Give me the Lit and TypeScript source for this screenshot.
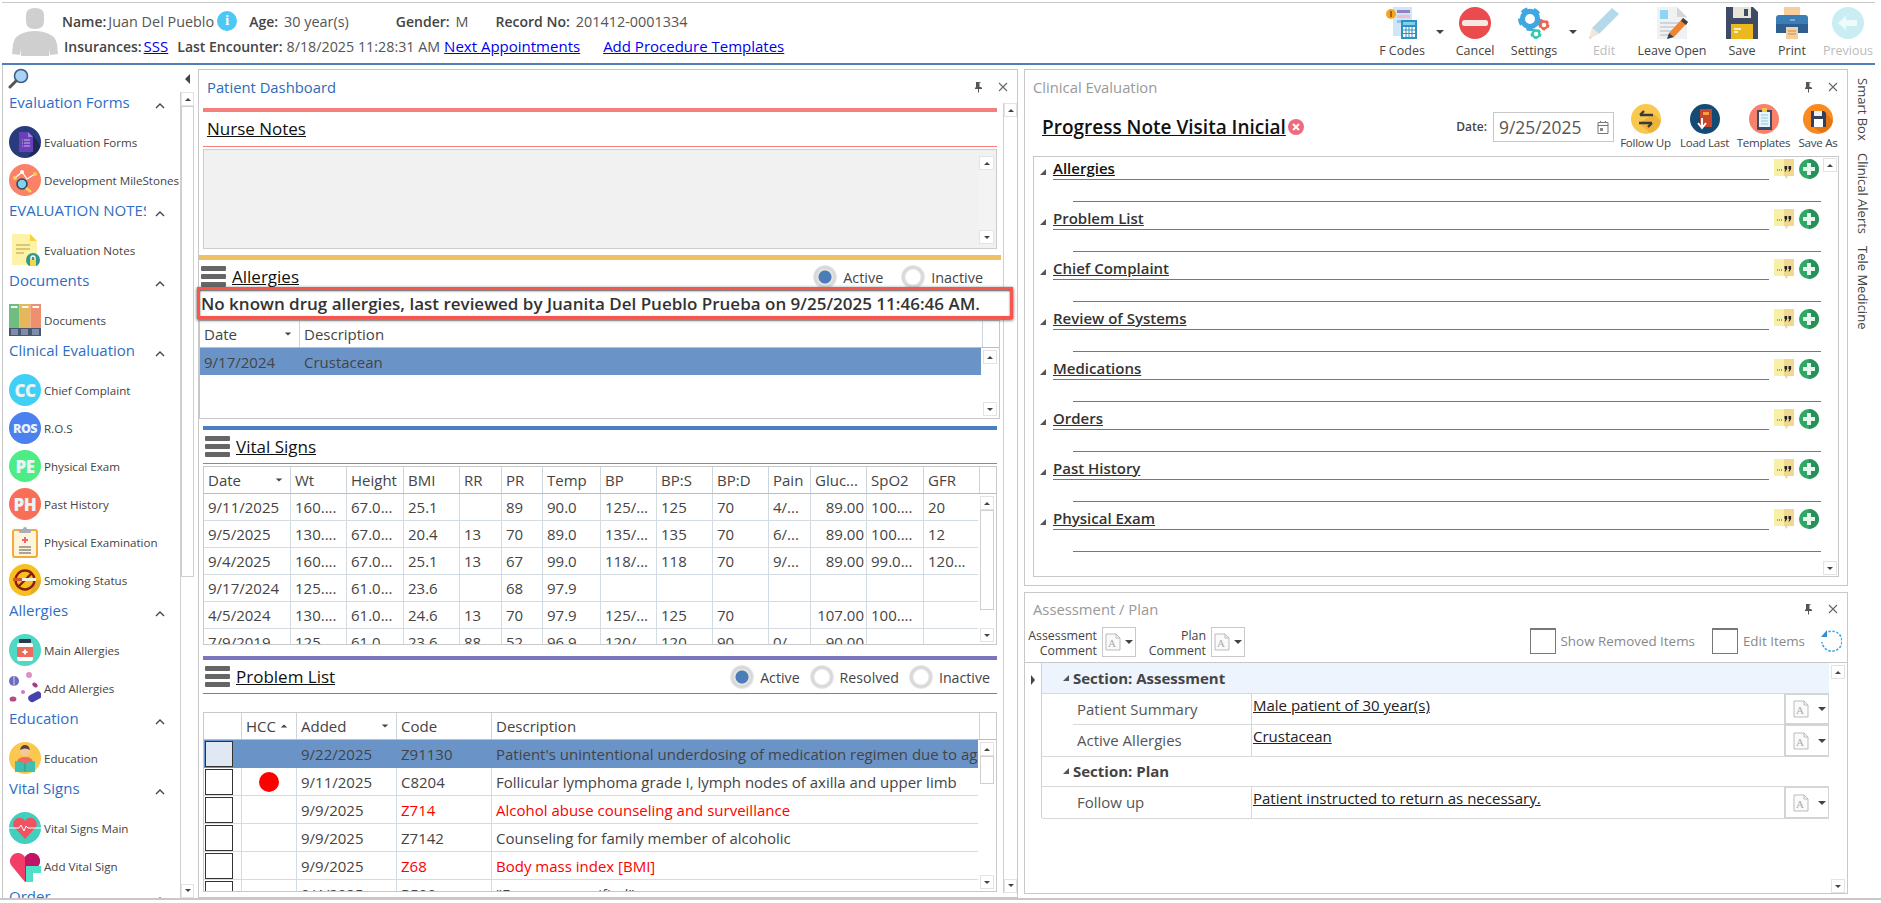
import { LitElement, html, css } from "lit";
import { customElement } from "lit/decorators.js";

const gear = (cx: number, cy: number, r: number, c: string) => html`<svg x="0" y="0" width="32" height="32" viewBox="0 0 32 32" style="overflow:visible"><circle cx=${cx} cy=${cy} r=${r * 0.72} fill="none" stroke=${c} stroke-width=${r * 0.5}></circle><circle cx=${cx} cy=${cy} r=${r * 0.98} fill="none" stroke=${c} stroke-width=${r * 0.32} stroke-dasharray=${`${r * 0.62} ${r * 0.62}`}></circle></svg>`;

const TB: Record<string, any> = {
  fcodes: html`<svg width="32" height="32" viewBox="0 0 32 32"><rect x="7" y="0" width="19" height="29" fill="#cfe6f7"></rect><rect x="11" y="3" width="13" height="3" fill="#9a7fc0"></rect><rect x="11" y="8" width="13" height="3" fill="#f3b9cf"></rect><rect x="11" y="13" width="13" height="3" fill="#8fc7ea"></rect><circle cx="5" cy="7" r="5" fill="#f2a422"></circle><rect x="4" y="4" width="2" height="6" fill="#a8620d"></rect><rect x="15" y="13" width="16" height="19" fill="#2d92bf"></rect><rect x="17" y="15" width="12" height="3" fill="#7fd0ea"></rect><rect x="17" y="20" width="12" height="10" fill="#fff"></rect><path d="M20 20v10M23 20v10M26 20v10M17 23h12M17 26.5h12" stroke="#2d92bf"></path></svg>`,
  cancel: html`<svg width="32" height="32" viewBox="0 0 32 32"><circle cx="16" cy="16" r="16" fill="#ea4b4f"></circle><rect x="3" y="13" width="26" height="6" rx="2.5" fill="#f6e7e3"></rect></svg>`,
  settings: html`<svg width="32" height="32" viewBox="0 0 32 32">${gear(12, 12, 10.5, "#3fa7e2")}${gear(26, 18, 4.8, "#f0634e")}${gear(18, 27, 4.8, "#38c7b0")}</svg>`,
  edit: html`<svg width="32" height="32" viewBox="0 0 32 32"><path d="M24 1l7 6L11 27l-7-6z" fill="#b6d9e9"></path><path d="M4 21l7 6-10 5z" fill="#f1e6dc"></path><path d="M2 29l2 2-3 1z" fill="#c9d8df"></path></svg>`,
  leave: html`<svg width="32" height="32" viewBox="0 0 32 32"><path d="M1 0h20l10 10v22H1z" fill="#eff1f3"></path><path d="M21 0l10 10H21z" fill="#d3d7da"></path><rect x="4" y="3" width="8" height="9" fill="#8fd4f3"></rect><path d="M4 16h20M4 20h16M4 24h12M4 28h10" stroke="#c8ccd0" stroke-width="1.4"></path><path d="M27 11l5 4-14 15-5-4z" fill="#f0842c"></path><path d="M27 11l5 4-2 3-5-4z" fill="#39414e"></path><path d="M13 26l5 4-7 2z" fill="#38404c"></path></svg>`,
  save: html`<svg width="32" height="32" viewBox="0 0 32 32"><path d="M0 0h27l5 5v27H0z" fill="#3e4a68"></path><rect x="7" y="0" width="18" height="11" fill="#e8e4d6"></rect><rect x="18" y="2" width="4" height="7" fill="#3e4a68"></rect><rect x="5" y="17" width="22" height="15" fill="#ecb820"></rect><path d="M8 22h7M8 25h4" stroke="#fff" stroke-width="1.4"></path></svg>`,
  print: html`<svg width="32" height="32" viewBox="0 0 32 32"><rect x="8" y="0" width="16" height="10" fill="#f7cf9e"></rect><path d="M3 8h26q3 0 3 3v13q0 2-3 2H3q-3 0-3-2V11q0-3 3-3z" fill="#3d7db7"></path><rect x="0" y="17" width="32" height="9" fill="#2d6090"></rect><rect x="10" y="20" width="12" height="12" fill="#f7cf9e"></rect><path d="M12 24h8M12 27h8" stroke="#b78e5c"></path><path d="M14 13h5" stroke="#bcd7ee"></path></svg>`,
  prev: html`<svg width="32" height="32" viewBox="0 0 32 32"><circle cx="16" cy="16" r="16" fill="#c9edf3"></circle><path d="M6 16l8-7v4h11v6H14v4z" fill="#eefafc"></path></svg>`,
};

const SI: Record<string, any> = {
  forms: html`<svg width="32" height="32" viewBox="0 0 32 32"><circle cx="16" cy="16" r="16" fill="#2a3b7d"></circle><path d="M24 9v16l-5.5 5.5A16 16 0 0 0 31.500 20z" fill="#1c2955"></path><path d="M10 6h9l5 5v15H10z" fill="#6a3fb8"></path><path d="M19 6l5 5h-5z" fill="#9d7fdc"></path><path d="M15 14h6M15 17h6M15 20h6" stroke="#c9b6ef"></path><path d="M13 14h1M13 17h1M13 20h1" stroke="#c9b6ef"></path></svg>`,
  miles: html`<svg width="32" height="32" viewBox="0 0 32 32"><circle cx="16" cy="16" r="16" fill="#fb8268"></circle><path d="M6 14L13 8l5 7 8-5" fill="none" stroke="#fff" stroke-width="1.2"></path><circle cx="6" cy="14" r="2" fill="#f7d35b"></circle><circle cx="13" cy="8" r="2" fill="#fff"></circle><circle cx="26" cy="10" r="2" fill="#f7d35b"></circle><circle cx="13" cy="20" r="5" fill="#7ed2ee" stroke="#33475b" stroke-width="1.6"></circle><path d="M17 24l5 4" stroke="#f7d35b" stroke-width="2.6"></path></svg>`,
  notes: html`<svg width="32" height="32" viewBox="0 0 32 32"><path d="M3 0h18l7 7v24H3z" fill="#fdf2a8"></path><path d="M21 0l7 7h-7z" fill="#f5d33f"></path><path d="M7 11h14M7 15h14M7 19h8" stroke="#cdbb60" stroke-width="1.3"></path><circle cx="24" cy="26" r="7" fill="#2b9a8d"></circle><rect x="21" y="26" width="6" height="6" fill="#f8d548"></rect><path d="M22 26v-2a2 2 0 0 1 4 0v2" fill="none" stroke="#fff" stroke-width="1.4"></path></svg>`,
  docs: html`<svg width="32" height="32" viewBox="0 0 32 32"><rect width="10.6" height="24" fill="#6fbe80"></rect><rect x="10.6" width="10.8" height="24" fill="#e5b75a"></rect><rect x="21.4" width="10.6" height="24" fill="#ee8f70"></rect><path d="M2 3h6.5M13 3h6.5M23.5 3H30" stroke="#fff" stroke-width="2"></path><rect y="24" width="32" height="8" fill="#4a566f"></rect><rect x="2" y="25" width="7" height="6" fill="#7f8cab"></rect><rect x="12" y="25" width="7" height="6" fill="#7f8cab"></rect><rect x="23" y="25" width="7" height="6" fill="#7f8cab"></rect></svg>`,
  clip: html`<svg width="32" height="32" viewBox="0 0 32 32"><rect x="4" y="4" width="24" height="27" rx="2" fill="#fdf4dc" stroke="#f4a938" stroke-width="2"></rect><path d="M10 6V3h4a2 2 0 0 1 4 0h4v3a1 1 0 0 1-1 1H11a1 1 0 0 1-1-1z" fill="#a9aeb3"></path><path d="M16 11v6M13 14h6" stroke="#f0656d" stroke-width="2"></path><path d="M10 21h12M10 24h12M10 27h12" stroke="#555" stroke-width="1.2"></path></svg>`,
  smoke: html`<svg width="32" height="32" viewBox="0 0 32 32"><circle cx="16" cy="16" r="16" fill="#f6c11e"></circle><path d="M7 16h21L20 31a16 16 0 0 0 12-15z" fill="#dfa12e" opacity=".7"></path><circle cx="16" cy="16" r="9.5" fill="none" stroke="#8a1f13" stroke-width="2.4"></circle><path d="M9 23L23 9" stroke="#8a1f13" stroke-width="2.4"></path><rect x="4" y="14" width="9" height="3" fill="#d8552b"></rect><rect x="13" y="14" width="14" height="3" fill="#f5f0e4"></rect></svg>`,
  bottle: html`<svg width="32" height="32" viewBox="0 0 32 32"><circle cx="16" cy="16" r="16" fill="#51d8c5"></circle><rect x="10" y="5" width="12" height="4" rx="1" fill="#2a3850"></rect><rect x="8" y="9" width="16" height="18" rx="2" fill="#fff"></rect><rect x="8" y="13" width="16" height="10" fill="#ee6a5b"></rect><path d="M16 15.5v5M13.5 18h5" stroke="#fff" stroke-width="1.8"></path></svg>`,
  pills: html`<svg width="32" height="32" viewBox="0 0 32 32"><circle cx="5" cy="9" r="5" fill="#6b6bc0"></circle><rect x="4.4" y="4" width="1.2" height="10" fill="#c5c5ea"></rect><circle cx="20" cy="3" r="3" fill="#e08fc4"></circle><ellipse cx="26" cy="13" rx="3" ry="2" fill="#a83a80" transform="rotate(35 26 13)"></ellipse><circle cx="14" cy="20" r="2" fill="#e070c0"></circle><ellipse cx="4" cy="27" rx="3.4" ry="2.6" fill="#b54a87"></ellipse><rect x="19" y="21" width="14" height="7.5" rx="3.7" fill="#4444aa" transform="rotate(-28 26 25)"></rect></svg>`,
  edu: html`<svg width="32" height="32" viewBox="0 0 32 32"><circle cx="16" cy="16" r="16" fill="#fbc84f"></circle><circle cx="16" cy="9" r="5" fill="#f4c7a1"></circle><path d="M11 8q1-5 5-5t5 5q-5-3-10 0z" fill="#5a4436"></path><path d="M8 20q1-5 8-5t8 5v4H8z" fill="#ef6a60"></path><path d="M6 19l10 2 10-2v11H6z" fill="#3ebfb0"></path><path d="M16 21v9" stroke="#2a9b8f"></path></svg>`,
  heart: html`<svg width="32" height="32" viewBox="0 0 32 32"><circle cx="16" cy="16" r="16" fill="#41cfbf"></circle><path d="M16 27L5 15a6 6 0 0 1 11-6 6 6 0 0 1 11 6z" fill="#f0525f"></path><path d="M0 16h10l2-3 3 6 2-5 2 2h13" fill="none" stroke="#fff" stroke-width="1"></path></svg>`,
  hplus: html`<svg width="32" height="32" viewBox="0 0 32 32"><path d="M16 32L2 15A8 8 0 0 1 16 7a8 8 0 0 1 14 8z" fill="#f23e66"></path><path d="M16 32V7a8 8 0 0 1 14 8z" fill="#c01468"></path><path d="M17 16h7V10h0v6h8v7h-8v9h-7v-9h0z" fill="#4fe0c8"></path></svg>`,
};

const FOLLOW = html`<svg width="30" height="30" viewBox="0 0 30 30"><circle cx="15" cy="15" r="15" fill="#fac84e"></circle><path d="M23 10L30 17A15 15 0 0 1 19 29L8 19z" fill="#e5a52e" opacity=".6"></path><path d="M9 11h13M9 11l4-4M21 19H8M21 19l-4 4" fill="none" stroke="#3a3a3a" stroke-width="2.4"></path></svg>`;
const LOAD = html`<svg width="30" height="30" viewBox="0 0 30 30"><circle cx="15" cy="15" r="15" fill="#134b74"></circle><rect x="10" y="5" width="12" height="18" fill="#c9452c"></rect><rect x="13" y="8" width="6" height="3" fill="#f2a23a"></rect><path d="M12 14v9M8 19l4 5 4-5" fill="none" stroke="#fff" stroke-width="2"></path></svg>`;
const TEMPL = html`<svg width="30" height="30" viewBox="0 0 30 30"><circle cx="15" cy="15" r="15" fill="#f9816a"></circle><rect x="8" y="6" width="15" height="20" fill="#3d4c68"></rect><rect x="10" y="8" width="11" height="15" fill="#e6f4fb"></rect><path d="M12 11h7M12 14h7M12 17h7M12 20h7" stroke="#8dc9e6"></path><rect x="13" y="4" width="5" height="4" fill="#f7c84a"></rect></svg>`;
const SAVEAS = html`<svg width="30" height="30" viewBox="0 0 30 30"><circle cx="15" cy="15" r="15" fill="#f98a1f"></circle><path d="M22 8L30 17A15 15 0 0 1 18 29L8 21z" fill="#d76d12" opacity=".7"></path><path d="M8 7h13l2 2v14H8z" fill="#33405c"></path><rect x="11" y="7" width="8" height="5" fill="#eee"></rect><rect x="11" y="15" width="9" height="8" fill="#fff"></rect></svg>`;

const NOTE = html`<svg width="20" height="20" viewBox="0 0 20 20"><path d="M0 0h20v17h-6l-2 3-1-3H0z" fill="#f7f0a6"></path><path d="M10 0h10v17h-6l-2 3-1-3h-1z" fill="#f0d890"></path><path d="M3 11h.9M5 11h.9M7 11h.9" stroke="#333"></path><path d="M10.5 7h2.6v3l-1.6 2.4h-1l.9-2.4h-.9zM14.5 7h2.6v3l-1.6 2.4h-1l.9-2.4h-.9z" fill="#222"></path></svg>`;
const PLUS = html`<svg width="20" height="20" viewBox="0 0 20 20"><circle cx="10" cy="10" r="10" fill="#2fa866"></circle><path d="M10 0a10 10 0 0 1 0 20z" fill="#28905a"></path><path d="M10 4v12M4 10h12" stroke="#e6f5ec" stroke-width="4"></path></svg>`;
const ADOC = html`<svg width="18" height="18" viewBox="0 0 18 18"><path d="M2 1h10l4 4v12H2z" fill="#fafafa" stroke="#bbb"></path><path d="M12 1v4h4" fill="none" stroke="#bbb"></path><text x="4" y="14" font-size="11" fill="#aaa" font-family="Liberation Serif, serif">A</text></svg>`;
const MENU = html`<svg width="25" height="21" viewBox="0 0 25 21"><rect width="25" height="5" rx="1" fill="#666"></rect><rect y="8" width="25" height="5" rx="1" fill="#666"></rect><rect y="16" width="25" height="5" rx="1" fill="#666"></rect></svg>`;
const PIN = html`<svg width="9" height="12" viewBox="0 0 9 12"><path d="M2 1h5v5l1 1v1H5v3.500H4V8H1V7l1-1z" fill="#555"></path><path d="M5.5 1.500v4.500H7V1.500z" fill="#fff"></path></svg>`;
const CLOSE = html`<svg width="10" height="10" viewBox="0 0 10 10"><path d="M1 1l8 8M9 1l-8 8" stroke="#666" stroke-width="1.1"></path></svg>`;

const VITALS_COLS = [87, 56, 57, 56, 42, 41, 58, 56, 56, 56, 42, 56, 57, 56];
const VITALS_HEAD = ["Date", "Wt", "Height", "BMI", "RR", "PR", "Temp", "BP", "BP:S", "BP:D", "Pain", "Gluc...", "SpO2", "GFR"];
const VITALS = [
  ["9/11/2025", "160....", "67.0...", "25.1", "", "89", "90.0", "125/...", "125", "70", "4/...", "89.00", "100....", "20"],
  ["9/5/2025", "130....", "67.0...", "20.4", "13", "70", "89.0", "135/...", "135", "70", "6/...", "89.00", "100....", "12"],
  ["9/4/2025", "160....", "67.0...", "25.1", "13", "67", "99.0", "118/...", "118", "70", "9/...", "89.00", "99.0...", "120..."],
  ["9/17/2024", "125....", "61.0...", "23.6", "", "68", "97.9", "", "", "", "", "", "", ""],
  ["4/5/2024", "130....", "61.0...", "24.6", "13", "70", "97.9", "125/...", "125", "70", "", "107.00", "100....", ""],
  ["7/9/2019", "125....", "61.0...", "23.6", "88", "52", "96.9", "120/...", "120", "90", "0/...", "90.00", "", ""],
];
const PROBLEM_COLS = [38, 55, 100, 95, 488];
const PROBLEMS = [
  { d: "9/22/2025", c: "Z91130", t: "Patient's unintentional underdosing of medication regimen due to age-related debility", sel: true },
  { d: "9/11/2025", c: "C8204", t: "Follicular lymphoma grade I, lymph nodes of axilla and upper limb", hcc: true },
  { d: "9/9/2025", c: "Z714", t: "Alcohol abuse counseling and surveillance", red: true },
  { d: "9/9/2025", c: "Z7142", t: "Counseling for family member of alcoholic" },
  { d: "9/9/2025", c: "Z68", t: "Body mass index [BMI]", red: true },
  { d: "9/4/2025", c: "R509", t: "\"Fever, unspecified\"" },
];

type Item = { label: string; icon?: string; badge?: string; cls?: string };
const SIDE: { title: string; items: Item[] }[] = [
  { title: "Evaluation Forms", items: [{ label: "Evaluation Forms", icon: "forms" }, { label: "Development MileStones", icon: "miles" }] },
  { title: "EVALUATION NOTES", items: [{ label: "Evaluation Notes", icon: "notes" }] },
  { title: "Documents", items: [{ label: "Documents", icon: "docs" }] },
  { title: "Clinical Evaluation", items: [
    { label: "Chief Complaint", badge: "CC", cls: "cc" }, { label: "R.O.S", badge: "ROS", cls: "ros" }, { label: "Physical Exam", badge: "PE", cls: "pe" }, { label: "Past History", badge: "PH", cls: "ph" },
    { label: "Physical Examination", icon: "clip" }, { label: "Smoking Status", icon: "smoke" }] },
  { title: "Allergies", items: [{ label: "Main Allergies", icon: "bottle" }, { label: "Add Allergies", icon: "pills" }] },
  { title: "Education", items: [{ label: "Education", icon: "edu" }] },
  { title: "Vital Signs", items: [{ label: "Vital Signs Main", icon: "heart" }, { label: "Add Vital Sign", icon: "hplus" }] },
  { title: "Order", items: [] },
];
const TOOLBAR = [
  { l: "F Codes", i: "fcodes", w: 60 }, { arrow: true, w: 16 },
  { l: "Cancel", i: "cancel", w: 54 },
  { l: "Settings", i: "settings", w: 64 }, { arrow: true, w: 14 },
  { l: "Edit", i: "edit", w: 48, off: true },
  { l: "Leave Open", i: "leave", w: 88 },
  { l: "Save", i: "save", w: 52 },
  { l: "Print", i: "print", w: 48 },
  { l: "Previous", i: "prev", w: 64, off: true },
];
const EVAL = ["Allergies", "Problem List", "Chief Complaint", "Review of Systems", "Medications", "Orders", "Past History", "Physical Exam"];

@customElement("app-root")
export class AppRoot extends LitElement {
  static styles = css`
    :host { display: block; width: 1881px; height: 903px; overflow: hidden; background: #fff; font-family: "Open Sans", "Noto Sans", sans-serif; font-size: 15px; color: #444; }
    * { box-sizing: border-box; }
    a { color: #0000ee; text-decoration: underline; }
    .app { display: flex; flex-direction: column; height: 897.5px; margin: 2px 0 0; border-bottom: 2px solid #c8c8c8; }
    .header { display: flex; height: 63px; flex: none; margin-left: 2px; margin-right: 6px; border-top: 1px solid #c8c8c8; border-bottom: 2px solid #4f7fb5; }
    .avatar { flex: none; margin: 4px 4px 0 10px; }
    .info { padding-top: 8px; }
    .irow { display: flex; align-items: center; height: 20px; white-space: nowrap; font-size: 14.4px; }
    .irow + .irow { margin-top: 5px; }
    .irow a { font-size: 15px; }
    .k { font-weight: 600; color: #444; font-size: 14px; }
    .v { color: #555; }
    .date { font-size: 14.3px; }
    .info-i { width: 20px; height: 20px; border-radius: 50%; background: #4bc8f6; color: #fff; font-size: 14px; font-weight: 700; display: flex; align-items: center; justify-content: center; margin-left: 3px; font-family: "Liberation Serif", serif; }
    .ml2 { margin-left: 2px; } .ml4 { margin-left: 4px; } .ml6 { margin-left: 6px; } .ml9 { margin-left: 9px; } .ml12 { margin-left: 12px; } .ml23 { margin-left: 23px; } .ml27 { margin-left: 27px; } .ml47 { margin-left: 47px; }
    .toolbar { display: flex; margin-left: auto; margin-right: -5px; }
    .tbtn { display: flex; flex-direction: column; align-items: center; padding-top: 4px; font-size: 12.5px; color: #444; white-space: nowrap; }
    .tbtn .ic { height: 32px; }
    .tbtn .lb { margin-top: 3px; }
    .tbtn.off { color: #bbb; }
    .tarrow { display: flex; justify-content: center; padding-top: 27px; }
    .tri-d { width: 0; height: 0; border-left: 4px solid transparent; border-right: 4px solid transparent; border-top: 4px solid #444; }
    .tri-u { width: 0; height: 0; border-left: 4px solid transparent; border-right: 4px solid transparent; border-bottom: 4px solid #444; }
    .tri-l { width: 0; height: 0; border-top: 5px solid transparent; border-bottom: 5px solid transparent; border-right: 5px solid #444; }
    .tri-r { width: 0; height: 0; border-top: 5px solid transparent; border-bottom: 5px solid transparent; border-left: 4px solid #444; }
    .corner { width: 0; height: 0; border-left: 6px solid transparent; border-bottom: 6px solid #555; flex: none; }

    .main { display: flex; flex: 1; min-height: 0; }
    .side { flex: none; width: 192px; margin-left: 2px; border-left: 1px solid #c8c8c8; display: flex; overflow: hidden; }
    .side-c { width: 177px; overflow: hidden; }
    .search { height: 26px; padding: 3px 0 0 5px; }
    .sh { height: 32px; display: flex; align-items: flex-start; }
    .sh-t { width: 137px; margin-left: 6px; overflow: hidden; white-space: nowrap; color: #2f6dc4; font-size: 15px; line-height: 22px; }
    .chev { margin: 12px 0 0 9px; }
    .si { height: 38px; display: flex; align-items: center; padding-left: 6px; gap: 3px; font-size: 11.6px; color: #444; white-space: nowrap; }
    .si svg { flex: none; }
    .badge { width: 32px; height: 32px; border-radius: 50%; color: #e9f4f6; font-weight: 800; display: flex; align-items: center; justify-content: center; font-size: 17px; letter-spacing: -0.5px; flex: none; }
    .badge.ros { font-size: 12.5px; }
    .cc { background: #40d0f6; } .ros { background: #4a80f0; } .pe { background: #4eec85; } .ph { background: #f96e56; }
    .side-s { width: 14px; display: flex; flex-direction: column; }
    .side-top { height: 27px; flex: none; display: flex; align-items: center; justify-content: center; }
    .side-sw { flex: 1; min-height: 0; }
    .sb { flex: none; display: flex; flex-direction: column; width: 14px; height: 100%; border-left: 1px solid #d0d0d0; }
    .sb .b { height: 14px; flex: none; display: flex; align-items: center; justify-content: center; background: #fff; border: 1px solid #e3e3e3; }
    .sb .tri-u, .sb .tri-d { border-width: 3.5px; border-left-width: 3.5px; border-right-width: 3.5px; }
    .sb .tri-u { border-top-width: 0; } .sb .tri-d { border-bottom-width: 0; }
    .sb .th { border: 1px solid #cfcfcf; background: #fff; flex: none; }
    .sb .sp { flex: 1; }
    .sb.plain { border-left: none; }

    .panel { border: 1px solid #c8c8c8; display: flex; flex-direction: column; background: #fff; }
    .dash { flex: none; width: 820px; margin: 4px 0 0 4px; }
    .phead { height: 33px; flex: none; display: flex; align-items: center; padding: 0 0 0 8px; font-size: 14.8px; color: #999; }
    .phead.blue { color: #2b6cb8; }
    .phead.short { height: 31px; }
    .phead .pin { margin-left: auto; margin-right: 15px; display: flex; }
    .phead .x { margin-right: 9px; display: flex; }
    .dbody { flex: 1; min-height: 0; display: flex; margin-bottom: 4px; }
    .dc { flex: 1; min-width: 0; display: flex; flex-direction: column; padding-top: 5px; }
    .bar { height: 4px; margin: 0 6px 0 4px; flex: none; }
    .bar.red { background: #f47f7c; }
    .bar.orange { background: #efc164; height: 5px; margin: 6px 2px 0 0; }
    .bar.blue { background: #4a7fc1; margin-top: 7px; }
    .bar.purple { background: #7b75bb; margin-top: 11px; }
    .ttl { display: flex; align-items: flex-start; height: 33px; padding: 6px 6px 0 6px; flex: none; }
    .ttl.nn { height: 34px; padding-left: 8px; }
    .ttl u { color: #111; font-size: 17px; line-height: 22px; }
    .ttl .mn { flex: none; margin-right: 6px; display: flex; }
    .ttl .mn.out { margin-left: -4px; }
    .line { height: 1px; margin: 0 6px 0 4px; flex: none; }
    .line.red { background: #f47f7c; } .line.blue { background: #6f8fc4; } .line.purple { background: #7b75bb; }
    .radios { margin-left: auto; display: flex; align-items: center; gap: 6px; font-size: 14.2px; line-height: 22px; color: #444; padding-right: 7px; }
    .radios.two { padding-right: 14px; font-size: 14.4px; }
    .rd { width: 24px; height: 24px; border-radius: 50%; background: radial-gradient(circle, #fff 0 7px, #e2e2e2 8px, #d5d5d5 10px, #eee 12px); display: flex; align-items: center; justify-content: center; flex: none; margin-top: -1px; }
    .rd.on { background: radial-gradient(circle, #4c7db8 0 6px, #e6e6e6 7px, #d5d5d5 10px, #eee 12px); }
    .rlab { margin-right: 4px; }
    .two .rlab { margin-right: 12px; }
    .radios .rlab.last { margin-right: 0; }
    .notes { height: 100px; margin: 2px 6px 0 4px; flex: none; background: #f1f1f1; border: 1px solid #ccc; display: flex; justify-content: flex-end; padding: 6px 2px 4px 0; }
    .notes .sb { height: 100%; background: #f3f3f3; border: none; width: 15px; }
    .all-sec { position: relative; height: 60px; flex: none; }
    .annot { position: absolute; left: -2px; top: 27px; width: 816px; height: 32px; border: 3px solid #f5574f; box-shadow: 0 1px 3px #444, inset 0 1px 2px #555; background: #fff; z-index: 3; display: flex; align-items: center; padding-left: 1px; font-weight: 600; font-size: 17px; color: #333; white-space: nowrap; }
    .tbl { flex: none; border: 1px solid #c8c8c8; display: flex; flex-direction: column; overflow: hidden; background: #fff; font-size: 15px; color: #444; }
    .t-all { height: 99px; margin: 0 3px 0 0; }
    .t-vit { height: 179px; margin: 2px 6px 0 4px; }
    .t-pro { height: 180px; margin: 18px 6px 0 4px; }
    .thead { display: grid; flex: none; height: 27px; border-bottom: 1px solid #bdbdbd; }
    .thead .c { border-right: 1px solid #ccd4dc; color: #444; justify-content: flex-start; }
    .tbody { flex: 1; min-height: 0; display: flex; overflow: hidden; }
    .rows { flex: 1; min-width: 0; overflow: hidden; }
    .row { display: grid; height: 27px; }
    .t-pro .row { height: 28px; }
    .t-pro .thead { height: 27px; }
    .row.sel { background: #6a94c8; }
    .c { display: flex; align-items: center; padding: 0 4px; white-space: nowrap; overflow: hidden; min-width: 0; }
    .g .c { border-right: 1px solid #d3dbe3; border-bottom: 1px solid #d3dbe3; }
    .sel.row .c { border-color: transparent; }
    .c.end { justify-content: flex-end; padding-right: 2px; }
    .c.red { color: #f00; }
    .thead .sort { margin-left: auto; margin-right: 3px; transform: scale(.8); }
    .thead .tri-u { margin-left: 4px; transform: scale(.8); }
    .chk { width: 28px; height: 26px; border: 1px solid #333; background: #fff; }
    .sel .chk { background: #e0e8f4; }
    .c.pc { padding: 0 0 0 1px; }
    .dot { width: 20px; height: 20px; border-radius: 50%; background: #f00; margin: 0 auto; }
    .sb18 { width: 18px; flex: none; padding: 2px 2px; height: 100%; }
    .sb18 .sb { width: 14px; border-left: none; }

    .rcol { flex: none; width: 824px; margin: 4px 0 0 6px; display: flex; flex-direction: column; gap: 6px; }
    .ce { height: 517px; flex: none; }
    .ap { height: 302px; flex: none; }
    .cetop { display: flex; height: 51px; flex: none; padding-left: 17px; }
    .cetitle { font-size: 19px; font-weight: 600; color: #111; text-decoration: underline; align-self: flex-start; margin-top: 11px; line-height: 26px; white-space: nowrap; }
    .xc { width: 16px; height: 16px; border-radius: 50%; background: #ef6a7c; margin: 16px 0 0 2px; display: flex; flex: none; }
    .datel { margin-left: auto; font-size: 12px; font-weight: 600; line-height: 30px; margin-top: 9px; color: #444; }
    .dateb { width: 121px; height: 30px; margin: 9px 0 0 6px; border: 1px solid #c8c8c8; display: flex; align-items: center; padding: 0 4px 0 5px; font-size: 17.4px; color: #555; }
    .dateb svg { margin-left: auto; }
    .cebtn { display: flex; flex-direction: column; align-items: center; width: 59px; margin-top: 1px; font-size: 11.6px; color: #444; white-space: nowrap; letter-spacing: -.3px; height: 50px; }
    .cebtn.first { margin-left: 2px; }
    .cebtn.last { width: 50px; }
    .cebtn span { margin-top: 1px; }
    .cepad { width: 4px; flex: none; }
    .celist { height: 421px; margin: 2px 8px 0 8px; border: 1px solid #c8c8c8; display: flex; flex: none; }
    .ceitems { flex: 1; min-width: 0; padding-top: 2px; }
    .cei { height: 50px; }
    .cehead { display: flex; align-items: flex-start; height: 20px; margin-left: 6px; }
    .cehead .corner { margin: 10px 7px 0 0; }
    .cename { flex: none; width: 716px; height: 21px; border-bottom: 1px solid #4f7fb5; }
    .cename u { display: block; font-size: 15px; font-weight: 600; color: #333; line-height: 19px; }
    .cename.first u { color: #111; }
    .ceic { margin-left: 5px; display: flex; gap: 5px; margin-top: 0; }
    .cel2 { margin: 22px 2px 0 39px; height: 1px; background: #4f7fb5; }
    .celist .sb { width: 15px; border: none; padding: 1px 1px 1px 0; }

    .aptop { display: flex; height: 38px; flex: none; align-items: flex-start; font-size: 12.4px; color: #444; padding-top: 4px; }
    .acl { width: 72px; text-align: right; line-height: 15px; white-space: nowrap; }
    .acl.p { width: 70px; }
    .adrop { width: 34px; height: 30px; border: 1px solid #c8c8c8; margin-left: 5px; display: flex; align-items: center; gap: 3px; padding-left: 1px; margin-top: -1px; }
    .chk2 { width: 26px; height: 26px; border: 1px solid #777; border-top-width: 2px; flex: none; }
    .chk2.second { margin-left: 17px; }
    .chkl { margin-left: 5px; font-size: 13.4px; line-height: 26px; color: #888; white-space: nowrap; }
    .apgrid { flex: 1; min-height: 0; display: flex; border-top: 1px solid #c8c8c8; }
    .apind { width: 16px; flex: none; padding: 12px 0 0 6px; }
    .aprows { width: 788px; flex: none; }
    .apsec { height: 31px; display: flex; align-items: center; padding-left: 21px; gap: 4px; font-weight: 700; font-size: 15px; color: #444; border-bottom: 1px solid #d8d8d8; border-left: 1px solid #d0d0d0; }
    .apsec.blue { background: #edf4fd; }
    .aprow { height: 31px; display: grid; grid-template-columns: 209px 1fr 45px; border-left: 1px solid #d0d0d0; }
    .aprow .k2 { padding-left: 35px; font-size: 15px; line-height: 31px; color: #555; border-bottom: 1px solid #d8d8d8; white-space: nowrap; }
    .aprow .val { border-left: 1px solid #d0d8e0; padding-left: 1px; font-size: 15px; color: #222; line-height: 22px; border-bottom: 1px solid #d8d8d8; white-space: nowrap; }
    .aprow.inset .k2 { border-bottom: none; background: linear-gradient(#d8d8d8, #d8d8d8) 31px 100% / 100% 1px no-repeat; }
    .acm { border: 2px solid #d4d4d4; border-width: 1px 1px 2px 2px; display: flex; align-items: center; gap: 8px; padding-left: 6px; }
    .apsb { width: 16px; flex: none; padding: 2px 2px 0; }
    .apsb .sb { border: none; }
    .tabs { flex: 1; writing-mode: vertical-rl; font-size: 13px; color: #444; padding: 13px 8px 0 0; display: flex; flex-direction: row; align-items: center; white-space: nowrap; }
    .tabs span { margin-bottom: 12px; line-height: 30px; }
    .aptools { margin-left: auto; display: flex; align-items: flex-start; }
    .rf { margin: 2px 5px 0 15px; flex: none; }
  `;

  private sb(thumbH: number, cls = "") {
    return html`<div class="sb ${cls}"><div class="b"><div class="tri-u"></div></div>${thumbH ? html`<div class="th" style="height:${thumbH}px"></div>` : ""}<div class="sp"></div><div class="b"><div class="tri-d"></div></div></div>`;
  }

  private header() {
    return html`<div class="header">
      <svg class="avatar" width="46" height="50" viewBox="0 0 46 50"><path d="M14 8q0-7 9-7t9 7v6q0 8-9 8t-9-8z" fill="#cfcfcf"></path><path d="M9 27q6-3 14-3t14 3q6 2 8 10l1 10-8 1-1-6v7H9v-7l-1 6-8-1 1-10q2-8 8-10z" fill="#cfcfcf"></path></svg>
      <div class="info">
        <div class="irow"><span class="k">Name:</span><span class="v ml2">Juan Del Pueblo</span><span class="info-i">i</span><span class="k ml12">Age:</span><span class="v ml6">30 year(s)</span><span class="k ml47">Gender:</span><span class="v ml6">M</span><span class="k ml27">Record No:</span><span class="v ml6">201412-0001334</span></div>
        <div class="irow"><span class="k ml2">Insurances:</span><a class="ml2" href="#">SSS</a><span class="k ml9">Last Encounter:</span><span class="v date ml4">8/18/2025 11:28:31 AM</span><a class="ml4" href="#">Next Appointments</a><a class="ml23" href="#">Add Procedure Templates</a></div>
      </div>
      <div class="toolbar">
        ${TOOLBAR.map((t: any) => t.arrow
          ? html`<div class="tarrow" style="width:${t.w}px"><div class="tri-d"></div></div>`
          : html`<div class="tbtn ${t.off ? "off" : ""}" style="width:${t.w}px"><div class="ic">${TB[t.i]}</div><div class="lb">${t.l}</div></div>`)}
      </div>
    </div>`;
  }

  private sidebar() {
    return html`<div class="side">
      <div class="side-c">
        <div class="search"><svg width="22" height="22" viewBox="0 0 22 22"><circle cx="13" cy="8" r="6.5" fill="#a9d3f5" stroke="#3a5f86" stroke-width="1.6"></circle><path d="M8 13l-6 6" stroke="#555" stroke-width="3" stroke-linecap="round"></path></svg></div>
        ${SIDE.map((s) => html`<div class="sh"><div class="sh-t">${s.title}</div><svg class="chev" width="10" height="6" viewBox="0 0 10 6"><path d="M1 5l4-4 4 4" fill="none" stroke="#444" stroke-width="1.4"></path></svg></div>
          ${s.items.map((i) => html`<div class="si">${i.badge ? html`<div class="badge ${i.cls}">${i.badge}</div>` : SI[i.icon!]}<span>${i.label}</span></div>`)}`)}
      </div>
      <div class="side-s"><div class="side-top"><div class="tri-l"></div></div><div class="side-sw">${this.sb(471)}</div></div>
    </div>`;
  }

  private radios(items: string[], cls = "") {
    return html`<div class="radios ${cls}">${items.map((r, i) => html`<div class="rd ${i === 0 ? "on" : ""}"></div><span class="rlab ${i === items.length - 1 ? "last" : ""}">${r}</span>`)}</div>`;
  }

  private dashboard() {
    const vcols = VITALS_COLS.map((c) => c + "px").join(" ");
    const pcols = PROBLEM_COLS.map((c) => c + "px").join(" ");
    return html`<div class="panel dash">
      <div class="phead blue"><span>Patient Dashboard</span><span class="pin">${PIN}</span><span class="x">${CLOSE}</span></div>
      <div class="dbody">
        <div class="dc">
          <div class="bar red"></div>
          <div class="ttl nn"><u>Nurse Notes</u></div>
          <div class="line red"></div>
          <div class="notes">${this.sb(0)}</div>
          <div class="bar orange"></div>
          <div class="all-sec">
            <div class="ttl"><span class="mn out">${MENU}</span><u>Allergies</u>${this.radios(["Active", "Inactive"], "two")}</div>
            <div class="annot">No known drug allergies, last reviewed by Juanita Del Pueblo Prueba on 9/25/2025 11:46:46 AM.</div>
          </div>
          <div class="tbl t-all">
            <div class="thead" style="grid-template-columns:100px 683px 1fr"><div class="c">Date<div class="tri-d sort"></div></div><div class="c">Description</div><div></div></div>
            <div class="tbody"><div class="rows"><div class="row sel" style="grid-template-columns:100px 1fr"><div class="c">9/17/2024</div><div class="c">Crustacean</div></div></div><div class="sb18">${this.sb(0, "plain")}</div></div>
          </div>
          <div class="bar blue"></div>
          <div class="ttl"><span class="mn">${MENU}</span><u>Vital Signs</u></div>
          <div class="line blue"></div>
          <div class="tbl t-vit">
            <div class="thead" style="grid-template-columns:${vcols} 1fr">${VITALS_HEAD.map((h, i) => html`<div class="c">${h}${i === 0 ? html`<div class="tri-d sort"></div>` : ""}</div>`)}<div></div></div>
            <div class="tbody"><div class="rows g">${VITALS.map((r) => html`<div class="row" style="grid-template-columns:${vcols}">${r.map((c, i) => html`<div class="c ${i === 11 ? "end" : ""}">${c}</div>`)}</div>`)}</div><div class="sb18">${this.sb(100, "plain")}</div></div>
          </div>
          <div class="bar purple"></div>
          <div class="ttl"><span class="mn">${MENU}</span><u>Problem List</u>${this.radios(["Active", "Resolved", "Inactive"])}</div>
          <div class="line purple"></div>
          <div class="tbl t-pro">
            <div class="thead" style="grid-template-columns:${pcols} 1fr"><div class="c"></div><div class="c">HCC<div class="tri-u"></div></div><div class="c">Added<div class="tri-d sort"></div></div><div class="c">Code</div><div class="c">Description</div><div></div></div>
            <div class="tbody"><div class="rows g">${PROBLEMS.map((p: any) => html`<div class="row ${p.sel ? "sel" : ""}" style="grid-template-columns:${pcols}"><div class="c pc"><div class="chk"></div></div><div class="c">${p.hcc ? html`<div class="dot"></div>` : ""}</div><div class="c">${p.d}</div><div class="c ${p.red ? "red" : ""}">${p.c}</div><div class="c ${p.red ? "red" : ""}">${p.t}</div></div>`)}</div><div class="sb18">${this.sb(28, "plain")}</div></div>
          </div>
        </div>
        ${this.sb(0)}
      </div>
    </div>`;
  }

  private clinical() {
    return html`<div class="panel ce">
      <div class="phead"><span>Clinical Evaluation</span><span class="pin">${PIN}</span><span class="x">${CLOSE}</span></div>
      <div class="cetop">
        <span class="cetitle">Progress Note Visita Inicial</span>
        <span class="xc"><svg width="16" height="16" viewBox="0 0 16 16"><path d="M5 5l6 6M11 5l-6 6" stroke="#fff" stroke-width="2"></path></svg></span>
        <span class="datel">Date:</span>
        <div class="dateb">9/25/2025<svg width="12" height="14" viewBox="0 0 12 14"><path d="M1 2.500h10v11H1zM1 5.500h10M3.500 1v2M8.500 1v2" fill="none" stroke="#777"></path><rect x="3" y="8" width="3" height="3" fill="#888"></rect></svg></div>
        <div class="cebtn first">${FOLLOW}<span>Follow Up</span></div>
        <div class="cebtn">${LOAD}<span>Load Last</span></div>
        <div class="cebtn">${TEMPL}<span>Templates</span></div>
        <div class="cebtn last">${SAVEAS}<span>Save As</span></div>
        <div class="cepad"></div>
      </div>
      <div class="celist">
        <div class="ceitems">${EVAL.map((e, i) => html`<div class="cei"><div class="cehead"><div class="corner"></div><div class="cename ${i === 0 ? "first" : ""}"><u>${e}</u></div><div class="ceic">${NOTE}${PLUS}</div></div><div class="cel2"></div></div>`)}</div>
        ${this.sb(0)}
      </div>
    </div>`;
  }

  private assess() {
    const acm = html`<div class="acm">${ADOC}<div class="tri-d"></div></div>`;
    const drop = html`<div class="adrop">${ADOC}<div class="tri-d"></div></div>`;
    return html`<div class="panel ap">
      <div class="phead short"><span>Assessment / Plan</span><span class="pin">${PIN}</span><span class="x">${CLOSE}</span></div>
      <div class="aptop">
        <div class="acl">Assessment<br />Comment</div>${drop}
        <div class="acl p">Plan<br />Comment</div>${drop}
        <div class="aptools">
          <div class="chk2"></div><span class="chkl">Show Removed Items</span>
          <div class="chk2 second"></div><span class="chkl">Edit Items</span>
          <svg class="rf" width="22" height="24" viewBox="0 0 22 24"><path d="M5 4a10 10 0 1 1-3 8" fill="none" stroke="#3fa7e2" stroke-width="1.6" stroke-dasharray="2.5 1.5"></path><path d="M7 0v7H1z" fill="#2f8fd0"></path></svg>
        </div>
      </div>
      <div class="apgrid">
        <div class="apind"><div class="tri-r"></div></div>
        <div class="aprows">
          <div class="apsec blue"><div class="corner"></div>Section: Assessment</div>
          <div class="aprow inset"><div class="k2">Patient Summary</div><div class="val"><u>Male patient of 30 year(s)</u></div>${acm}</div>
          <div class="aprow"><div class="k2">Active Allergies</div><div class="val"><u>Crustacean</u></div>${acm}</div>
          <div class="apsec"><div class="corner"></div>Section: Plan</div>
          <div class="aprow"><div class="k2">Follow up</div><div class="val"><u>Patient instructed to return as necessary.</u></div>${acm}</div>
        </div>
        <div class="apsb">${this.sb(0, "plain")}</div>
      </div>
    </div>`;
  }

  render() {
    return html`<div class="app">
      ${this.header()}
      <div class="main">
        ${this.sidebar()}
        ${this.dashboard()}
        <div class="rcol">${this.clinical()}${this.assess()}</div>
        <div class="tabs"><span>Smart Box</span><span>Clinical Alerts</span><span>Tele Medicine</span></div>
      </div>
    </div>`;
  }
}
